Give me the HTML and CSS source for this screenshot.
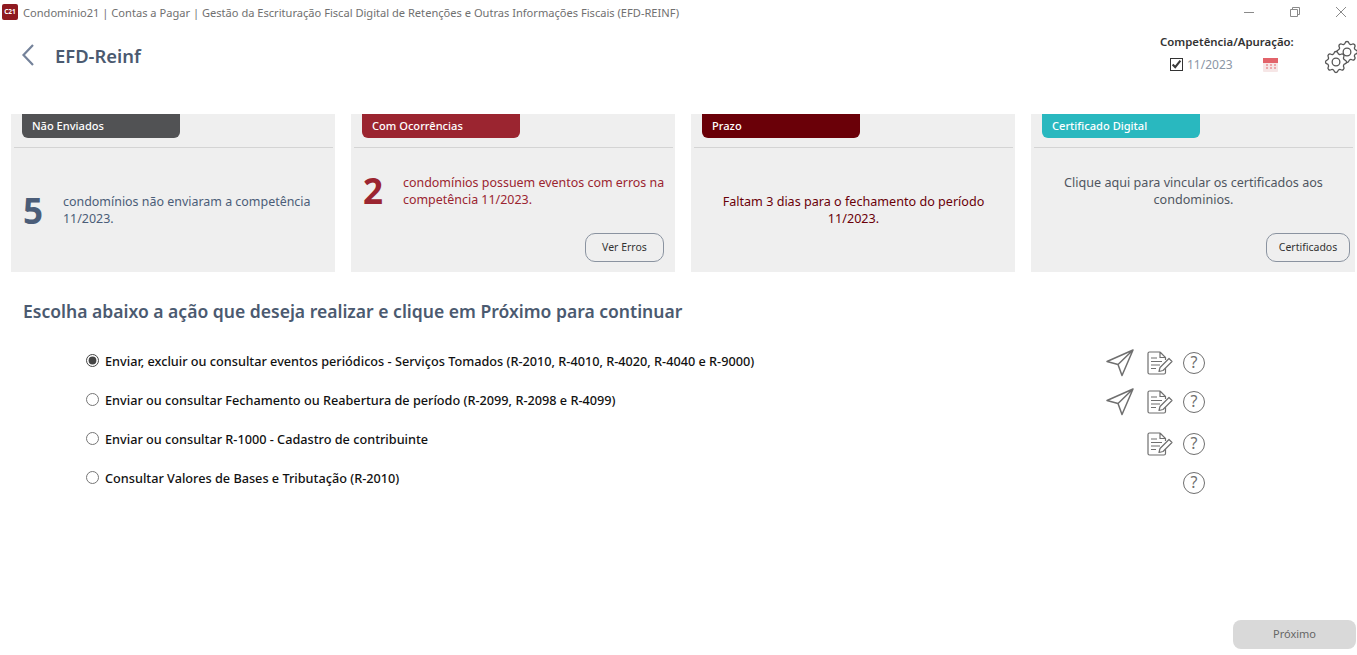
FILE: index.html
```html
<!DOCTYPE html>
<html lang="pt-br">
<head>
<meta charset="UTF-8">
<meta name="viewport" content="width=device-width, initial-scale=1.0">
<title>EFD-Reinf</title>
<link rel="stylesheet" href="styles.css">
</head>
<body>

<svg class="defs" aria-hidden="true">
    <symbol id="i-send" viewBox="0 0 30 28">
        <path d="M28 1 L2 12.500 L13 15.500 L17 26.500 Z M28 1 L13 15.500" fill="none" stroke="#6f6f6f" stroke-width="1.500" stroke-linejoin="round"/>
    </symbol>
    <symbol id="i-doc" viewBox="0 0 26 24">
        <path d="M13 1 H2.500 Q1 1 1 2.500 V21.500 Q1 23 2.500 23 H17 Q18.500 23 18.500 21.500 V17 M13 1 L18.500 6.500 V9 M13 1 V6.500 H18.500" fill="none" stroke="#6f6f6f" stroke-width="1.200"/>
        <path d="M4 7 H10 M4 10.500 H15 M4 14 H13 M4 17.500 H9" fill="none" stroke="#6f6f6f" stroke-width="1.200"/>
        <path d="M12 20.500 L13 16.500 L22 7.500 L25 10.500 L16 19.500 Z" fill="#fff" stroke="#6f6f6f" stroke-width="1.200" stroke-linejoin="round"/>
    </symbol>
    <symbol id="i-cog" viewBox="0 0 24 24">
        <path d="M10.325 4.317c.426-1.756 2.924-1.756 3.35 0a1.724 1.724 0 002.573 1.066c1.543-.94 3.31.826 2.37 2.37a1.724 1.724 0 001.065 2.572c1.756.426 1.756 2.924 0 3.35a1.724 1.724 0 00-1.066 2.573c.94 1.543-.826 3.31-2.37 2.37a1.724 1.724 0 00-2.572 1.065c-.426 1.756-2.924 1.756-3.35 0a1.724 1.724 0 00-2.573-1.066c-1.543.94-3.31-.826-2.37-2.37a1.724 1.724 0 00-1.065-2.572c-1.756-.426-1.756-2.924 0-3.35a1.724 1.724 0 001.066-2.573c-.94-1.543.826-3.31 2.37-2.37.996.608 2.296.07 2.572-1.065z" fill="#fff" stroke="#555" stroke-width="1.100"/>
        <circle cx="12" cy="12" r="3.300" fill="#fff" stroke="#555" stroke-width="1.100"/>
    </symbol>
</svg>

<div class="titlebar">
    <span class="app-logo">C21</span>
    <span class="app-title">Condomínio21 | Contas a Pagar | Gestão da Escrituração Fiscal Digital de Retenções e Outras Informações Fiscais (EFD-REINF)</span>
    <div class="win-controls">
        <svg width="12" height="12" viewBox="0 0 12 12"><path d="M1 6.500 H11" stroke="#8a8a8a"/></svg>
        <svg width="12" height="12" viewBox="0 0 12 12"><path d="M1.500 3.500 H8.500 V10.500 H1.500 Z M3.500 3.500 V1.500 H10.500 V8.500 H8.500" fill="none" stroke="#8a8a8a"/></svg>
        <svg width="12" height="12" viewBox="0 0 12 12"><path d="M1 1 L11 11 M11 1 L1 11" stroke="#8a8a8a"/></svg>
    </div>
</div>

<header class="page-header">
    <svg class="back" width="14" height="24" viewBox="0 0 14 24"><path d="M12 2 L2.500 12 L12 22" fill="none" stroke="#74829a" stroke-width="2.200"/></svg>
    <h1>EFD-Reinf</h1>
    <div class="competencia">
        <strong>Competência/Apuração:</strong>
        <div class="competencia-row">
            <input type="checkbox" checked>
            <span class="competencia-date">11/2023</span>
            <svg class="cal" width="17" height="16" viewBox="0 0 17 16">
                <rect x="1" y="1" width="15" height="14" rx="1" fill="#f6e6e6"/>
                <rect x="1" y="1" width="15" height="5" fill="#e2636a"/>
                <path d="M4 8 H6 M8 8 H10 M12 8 H14 M4 11 H6 M8 11 H10 M12 11 H14" stroke="#eda7aa" stroke-width="2"/>
            </svg>
        </div>
    </div>
    <div class="gear">
        <svg class="gear-back" width="28" height="28"><use href="#i-cog"/></svg>
        <svg class="gear-front" width="28" height="28"><use href="#i-cog"/></svg>
    </div>
</header>

<section class="cards">
    <div class="card">
        <div class="card-tab tab-gray">Não Enviados</div>
        <div class="card-body">
            <div class="card-main">
                <span class="card-num num-blue">5</span>
                <p class="txt-blue">condomínios não enviaram a competência 11/2023.</p>
            </div>
        </div>
    </div>
    <div class="card">
        <div class="card-tab tab-red">Com Ocorrências</div>
        <div class="card-body">
            <div class="card-main">
                <span class="card-num num-red">2</span>
                <p class="txt-red">condomínios possuem eventos com erros na competência 11/2023.</p>
            </div>
            <button class="btn-card">Ver Erros</button>
        </div>
    </div>
    <div class="card">
        <div class="card-tab tab-wine">Prazo</div>
        <div class="card-body">
            <div class="card-main center">
                <p class="txt-wine">Faltam 3 dias para o fechamento do período 11/2023.</p>
            </div>
        </div>
    </div>
    <div class="card">
        <div class="card-tab tab-teal">Certificado Digital</div>
        <div class="card-body">
            <div class="card-main center">
                <p class="txt-gray">Clique aqui para vincular os certificados aos condominios.</p>
            </div>
            <button class="btn-card btn-cert">Certificados</button>
        </div>
    </div>
</section>

<h2>Escolha abaixo a ação que deseja realizar e clique em Próximo para continuar</h2>

<!-- Opções -->
<section class="options">
    <div class="option">
        <label><input type="radio" name="acao" checked> Enviar, excluir ou consultar eventos periódicos - Serviços Tomados (R-2010, R-4010, R-4020, R-4040 e R-9000)</label>
        <div class="option-icons">
            <svg class="ic-send"><use href="#i-send"/></svg>
            <svg class="ic-doc"><use href="#i-doc"/></svg>
            <span class="ic-help">?</span>
        </div>
    </div>
    <div class="option">
        <label><input type="radio" name="acao"> Enviar ou consultar Fechamento ou Reabertura de período (R-2099, R-2098 e R-4099)</label>
        <div class="option-icons">
            <svg class="ic-send"><use href="#i-send"/></svg>
            <svg class="ic-doc"><use href="#i-doc"/></svg>
            <span class="ic-help">?</span>
        </div>
    </div>
    <div class="option">
        <label><input type="radio" name="acao"> Enviar ou consultar R-1000 - Cadastro de contribuinte</label>
        <div class="option-icons low">
            <svg class="ic-doc"><use href="#i-doc"/></svg>
            <span class="ic-help">?</span>
        </div>
    </div>
    <div class="option">
        <label><input type="radio" name="acao"> Consultar Valores de Bases e Tributação (R-2010)</label>
        <div class="option-icons low">
            <span class="ic-help">?</span>
        </div>
    </div>
</section>

<footer class="page-footer">
    <button class="btn-next">Próximo</button>
</footer>

</body>
</html>
```

FILE: styles.css
```css
* {
    box-sizing: border-box;
}

body {
    font-family: "Noto Sans", "Open Sans", sans-serif;
    margin: 0;
    height: 655px;
    overflow: hidden;
    display: flex;
    flex-direction: column;
    background-color: #fff;
}

.defs {
    position: absolute;
    width: 0;
    height: 0;
}

.titlebar {
    display: flex;
    align-items: center;
    height: 24px;
    padding-left: 2px;
}

.app-logo {
    width: 16px;
    height: 16px;
    margin-right: 5px;
    border-radius: 2px;
    background-color: #8f1a20;
    color: #fff;
    font-size: 6.500px;
    font-weight: 700;
    line-height: 16px;
    text-align: center;
}

.app-title {
    font-size: 11.100px;
    color: #707070;
    white-space: nowrap;
}

.win-controls {
    display: flex;
    gap: 34px;
    margin-left: auto;
    padding-right: 10px;
}

.page-header {
    display: flex;
    align-items: flex-start;
    height: 90px;
}

.back {
    margin: 19px 0 0 21px;
}

h1 {
    margin: 19px 0 0 20px;
    font-size: 18.400px;
    font-weight: 600;
    line-height: 26px;
    color: #4b5a70;
}

.competencia {
    margin-left: auto;
    margin-top: 10px;
    width: 134px;
    font-size: 11.400px;
    color: #333;
}

.competencia strong {
    display: block;
    font-weight: 600;
    line-height: 16px;
    white-space: nowrap;
}

.competencia-row {
    display: flex;
    align-items: center;
    margin-top: 6px;
    padding-left: 10px;
}

.competencia-row input {
    width: 13px;
    height: 13px;
    margin: 0 4px 0 0;
    accent-color: #fff;
    outline: 1px solid #333;
    outline-offset: -1px;
}

.competencia-date {
    color: #8b96a5;
    font-size: 12px;
}

.cal {
    margin-left: 29px;
}

.gear {
    position: relative;
    width: 32px;
    height: 32px;
    margin: 16px 0 0 31px;
    flex-shrink: 0;
}

.gear-back {
    position: absolute;
    top: -2px;
    left: 8px;
}

.gear-front {
    position: absolute;
    top: 8px;
    left: -3px;
}

.cards {
    display: flex;
    gap: 16px;
    padding: 0 2px 0 11px;
}

.card {
    width: 324px;
    height: 158px;
    display: flex;
    flex-direction: column;
    background-color: #efefef;
}

.card-tab {
    width: 158px;
    height: 24px;
    margin-left: 11px;
    padding-left: 10px;
    border-radius: 0 0 6px 6px;
    color: #fff;
    font-size: 11.100px;
    font-weight: 500;
    line-height: 24px;
}

.tab-gray { background-color: #515254; }
.tab-red { background-color: #9b2530; }
.tab-wine { background-color: #6a0008; }
.tab-teal { background-color: #29b8bf; }

.card-body {
    flex: 1;
    display: flex;
    flex-direction: column;
    margin: 9px 2px 0 3px;
    border-top: 1px solid #d4d4d4;
}

.card-main {
    flex: 1;
    display: flex;
    align-items: center;
    padding: 0 2px 0 9px;
}

.card-main.center {
    text-align: center;
    padding: 0 16px;
}

.card-main p {
    flex: 1;
    margin: 0;
    font-size: 12.450px;
    line-height: 17px;
}

.card-main.center p {
    font-size: 12.600px;
}

.card-num {
    width: 40px;
    font-size: 35px;
    font-weight: 700;
    line-height: 40px;
    flex-shrink: 0;
    margin-top: 1px;
}

.num-blue { color: #4b5d78; }
.num-red { color: #9b2530; }
.txt-blue { color: #4b5d78; }
.txt-red { color: #9b2530; }
.txt-wine { color: #6a0008; }
.txt-gray { color: #4f5661; }

.btn-card {
    align-self: flex-end;
    width: 79px;
    height: 29px;
    margin: 0 9px 10px 0;
    padding: 0 0 2px;
    background-color: #efefef;
    border: 1px solid #8a93a0;
    border-radius: 10px;
    color: #333;
    font-family: inherit;
    font-size: 10.500px;
}

.btn-cert {
    width: 84px;
    margin-right: 3px;
}

h2 {
    margin: 27px 0 0 23px;
    font-size: 17.550px;
    font-weight: 600;
    line-height: 24px;
    color: #4b5a70;
}

.options {
    width: 1119px;
    margin: 18px 0 0 86px;
}

.option {
    display: flex;
    justify-content: space-between;
    align-items: center;
    height: 39px;
}

.option label {
    display: flex;
    align-items: center;
    font-size: 12.700px;
    font-weight: 500;
    color: #111;
    white-space: nowrap;
}

.option input {
    width: 13px;
    height: 13px;
    margin: 0 6px 0 0;
    accent-color: #444;
}

.option-icons {
    display: flex;
    justify-content: flex-end;
    align-items: center;
    gap: 12px;
    margin-top: 4px;
}

.option-icons.low {
    margin-top: 10px;
}

.ic-send {
    width: 30px;
    height: 28px;
}

.ic-doc {
    width: 26px;
    height: 24px;
    margin-right: -2px;
}

.ic-help {
    width: 22px;
    height: 22px;
    border: 1px solid #6f6f6f;
    border-radius: 50%;
    color: #6f6f6f;
    font-size: 16px;
    line-height: 19px;
    text-align: center;
}

.page-footer {
    margin-top: auto;
    display: flex;
    justify-content: flex-end;
    padding: 0 1px 6px 0;
}

.btn-next {
    width: 123px;
    height: 29px;
    padding: 0 0 2px;
    border: none;
    border-radius: 8px;
    background-color: #d9d9d9;
    color: #666;
    font-family: inherit;
    font-size: 11px;
}
```
